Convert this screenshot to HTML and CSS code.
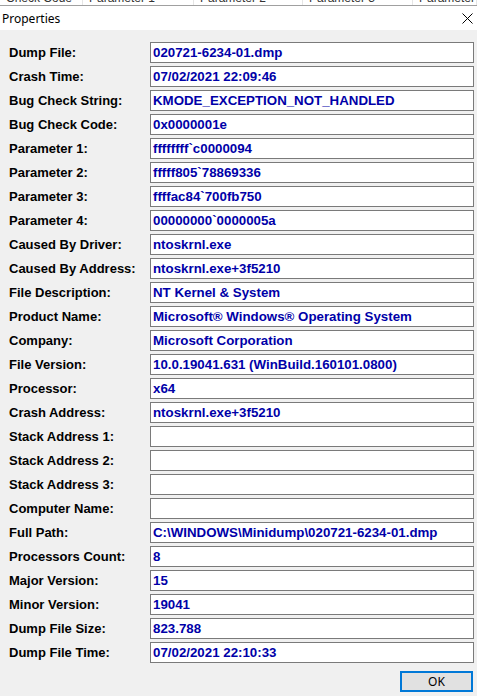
FILE: index.html
```html
<!DOCTYPE html>
<html lang="en">
<head>
    <meta charset="UTF-8">
    <meta name="viewport" content="width=device-width, initial-scale=1.0">
    <title>Properties</title>
    <link rel="stylesheet" href="styles.css">
</head>
<body>
    <!-- list header peeking out behind the dialog -->
    <div class="strip">
        <span class="col c1">Check Code</span>
        <span class="col c2">Parameter 1</span>
        <span class="col c3">Parameter 2</span>
        <span class="col c4">Parameter 3</span>
        <span class="col c5">Parameter 4</span>
    </div>

    <div class="dialog">
        <div class="titlebar">
            <span class="title">Properties</span>
            <svg class="close" width="11" height="11" viewBox="0 0 11 11">
                <path d="M0.5 0.5 L10.5 10.5 M10.5 0.5 L0.5 10.5" stroke="#000" stroke-width="1" fill="none"/>
            </svg>
        </div>

        <div class="content">
            <div class="rows">
                <label>Dump File:</label><div class="field">020721-6234-01.dmp</div>
                <label>Crash Time:</label><div class="field">07/02/2021 22:09:46</div>
                <label>Bug Check String:</label><div class="field">KMODE_EXCEPTION_NOT_HANDLED</div>
                <label>Bug Check Code:</label><div class="field">0x0000001e</div>
                <label>Parameter 1:</label><div class="field">ffffffff`c0000094</div>
                <label>Parameter 2:</label><div class="field">fffff805`78869336</div>
                <label>Parameter 3:</label><div class="field">ffffac84`700fb750</div>
                <label>Parameter 4:</label><div class="field">00000000`0000005a</div>
                <label>Caused By Driver:</label><div class="field">ntoskrnl.exe</div>
                <label>Caused By Address:</label><div class="field">ntoskrnl.exe+3f5210</div>
                <label>File Description:</label><div class="field">NT Kernel &amp; System</div>
                <label>Product Name:</label><div class="field">Microsoft® Windows® Operating System</div>
                <label>Company:</label><div class="field">Microsoft Corporation</div>
                <label>File Version:</label><div class="field">10.0.19041.631 (WinBuild.160101.0800)</div>
                <label>Processor:</label><div class="field">x64</div>
                <label>Crash Address:</label><div class="field">ntoskrnl.exe+3f5210</div>
                <label>Stack Address 1:</label><div class="field"></div>
                <label>Stack Address 2:</label><div class="field"></div>
                <label>Stack Address 3:</label><div class="field"></div>
                <label>Computer Name:</label><div class="field"></div>
                <label>Full Path:</label><div class="field">C:\WINDOWS\Minidump\020721-6234-01.dmp</div>
                <label>Processors Count:</label><div class="field">8</div>
                <label>Major Version:</label><div class="field">15</div>
                <label>Minor Version:</label><div class="field">19041</div>
                <label>Dump File Size:</label><div class="field">823.788</div>
                <label>Dump File Time:</label><div class="field">07/02/2021 22:10:33</div>
            </div>

            <div class="buttons">
                <button class="ok">OK</button>
            </div>
        </div>
    </div>
</body>
</html>
```

FILE: styles.css
```css
body {
    margin: 0;
    background: #f0f0f0;
    font-family: 'Liberation Sans', Arial, sans-serif;
    overflow: hidden;
}
.strip {
    height: 5px;
    background: #fff;
    border-bottom: 1px solid #a0a0a0;
    display: flex;
    overflow: hidden;
}
.strip .col {
    display: block;
    box-sizing: border-box;
    height: 5px;
    padding-left: 6px;
    border-right: 1px solid #e5e5e5;
    font-size: 12px;
    line-height: 12px;
    color: #333;
    overflow: hidden;
}
.strip .col::before {
    content: '';
    display: block;
    margin-top: -8px;
}
.c1 { width: 83px; }
.c2 { width: 111px; }
.c3 { width: 109px; }
.c4 { width: 110px; }
.c5 { width: 64px; border-right: none; }

.titlebar {
    height: 24px;
    background: #fff;
    display: flex;
    align-items: center;
    justify-content: space-between;
    padding: 0 4px 0 2px;
}
.title {
    font-family: 'Noto Sans', 'Open Sans', sans-serif;
    font-size: 12px;
    color: #000;
}
.close {
    margin-top: 1px;
}

.content {
    padding: 12px 3px 0 9px;
}
.rows {
    display: grid;
    grid-template-columns: 141px 1fr;
    row-gap: 3px;
}
.rows label {
    font-size: 13px;
    font-weight: bold;
    color: #000;
    line-height: 21px;
    white-space: nowrap;
}
.field {
    height: 21px;
    box-sizing: border-box;
    border: 1px solid #7a7a7a;
    background: #fff;
    padding-left: 2px;
    font-size: 13.3px;
    font-weight: bold;
    color: #0000a8;
    line-height: 19px;
    white-space: nowrap;
    overflow: hidden;
}

.buttons {
    display: flex;
    justify-content: flex-end;
    margin-top: 8px;
    padding-right: 1px;
}
.ok {
    width: 73px;
    height: 21px;
    box-sizing: border-box;
    border: 2px solid #0078d7;
    background: #e1e1e1;
    font-family: 'Noto Sans', 'Open Sans', sans-serif;
    font-size: 12px;
    color: #000;
    padding: 0;
}
```
